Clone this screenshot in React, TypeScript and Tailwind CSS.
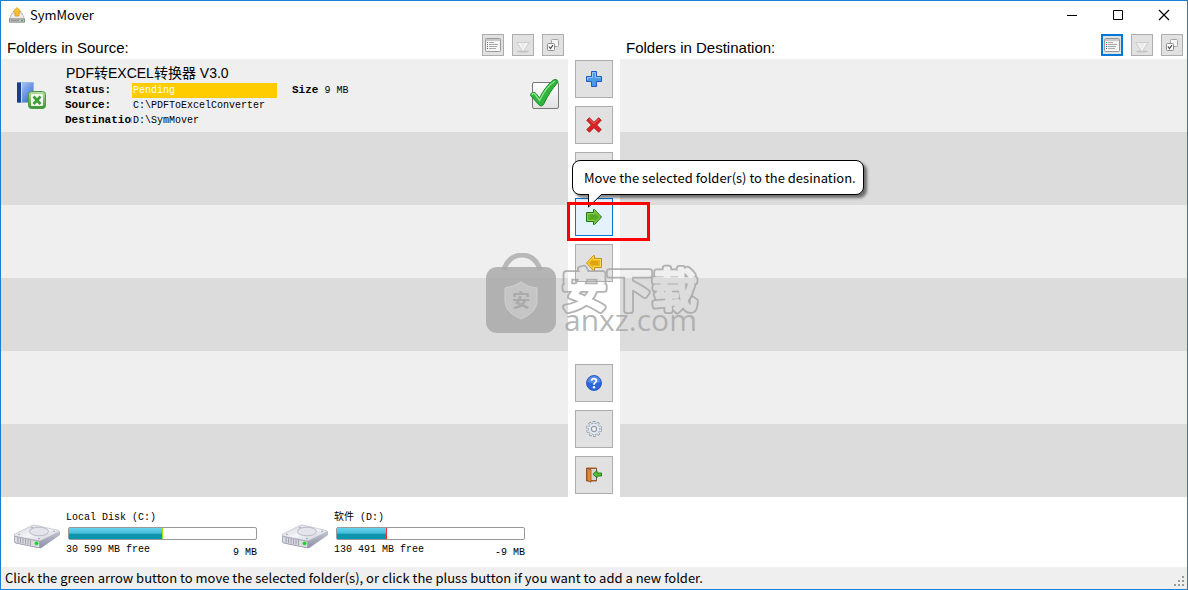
import { useState } from "react";
import type { ReactNode } from "react";
import clsx from "clsx";

const STRIPES = [0, 1, 2, 3, 4, 5];

const DRIVES = [
    { name: "Local Disk (C:)", free: "30 599 MB free", change: "9 MB", used: 50, edge: "border-lime-400" },
    { name: "软件 (D:)", free: "130 491 MB free", change: "-9 MB", used: 26.5, edge: "border-red-500" },
];

/* Icons */

function AppIcon() {
    return (
        <svg width="16" height="16" viewBox="0 0 16 16" aria-hidden="true">
            <path d="M3 6h10l2.500 6H.5z" fill="#ececec" stroke="#a8a8a8" strokeWidth=".7" />
            <path d="M.5 12h15v3.200H.5z" fill="#c9cbcb" stroke="#777" strokeWidth=".8" />
            <path d="M2 13.600h8" stroke="#8f9594" />
            <path d="M12 13.600h2" stroke="#2fb52f" strokeWidth="1.400" />
            <path d="M8 .5l4 4.200h-2V9H6V4.700H4z" fill="#fbc02d" stroke="#e09a10" strokeWidth=".8" />
        </svg>
    );
}

function ListIcon() {
    return (
        <svg width="16" height="14" viewBox="0 0 16 14" className="shrink-0" aria-hidden="true">
            <rect x="0.5" y="0.5" width="15" height="13" rx="1" fill="#f6f6f6" stroke="#999" />
            <rect x="1" y="1" width="14" height="2" fill="#c9c9c9" />
            <g shapeRendering="crispEdges">
                <rect x="2" y="4" width="1" height="1" fill="#22bb22" />
                <rect x="2" y="6" width="1" height="1" fill="#dd4433" />
                <rect x="2" y="8" width="1" height="1" fill="#3366cc" />
                <rect x="2" y="10" width="1" height="1" fill="#555555" />
                <rect x="4" y="4" width="5" height="1" fill="#aaaaaa" />
                <rect x="4" y="6" width="9" height="1" fill="#aaaaaa" />
                <rect x="4" y="8" width="8" height="1" fill="#aaaaaa" />
                <rect x="4" y="10" width="7" height="1" fill="#aaaaaa" />
            </g>
        </svg>
    );
}

function TriangleIcon() {
    return (
        <svg width="16" height="14" viewBox="0 0 16 14" className="mt-1 shrink-0" aria-hidden="true">
            <ellipse cx="8" cy="11.500" rx="6" ry="1" fill="#c2c2c2" />
            <path d="M1.500 2.500h13L8 11.500z" fill="#ebebeb" stroke="#c6c6c6" strokeWidth="0.8" />
            <path d="M4.500 3L8 10.500 11.500 3" fill="none" stroke="#fafafa" strokeWidth="0.8" />
        </svg>
    );
}

function SelectIcon() {
    return (
        <svg width="14" height="14" viewBox="0 0 14 14" className="shrink-0" aria-hidden="true">
            <rect x="5.500" y="1.500" width="7" height="7" rx="1" fill="#f5f5f5" stroke="#a5a5a5" />
            <rect x="1.500" y="5.500" width="7" height="7" rx="1" fill="#fafafa" stroke="#8c8c8c" />
            <path d="M3 8.500l1.500 2L7 7.200" fill="none" stroke="#4a4a4a" strokeWidth="1.200" />
        </svg>
    );
}

function PlusIcon() {
    return (
        <svg width="16" height="16" viewBox="0 0 16 16" aria-hidden="true">
            <path d="M5.500.5h5v5h5v5h-5v5h-5v-5h-5v-5h5z" fill="#4e9ae8" stroke="#1c59c4" strokeLinejoin="round" />
            <path d="M6.500 6.500v-5h3v5h5M1.500 9v-2.500h5" fill="none" stroke="#92c8fb" />
        </svg>
    );
}

function CrossIcon() {
    return (
        <svg width="16" height="16" viewBox="0 0 16 16" aria-hidden="true">
            <path d="M3.300.7L8 5.300 12.700.7l2.600 2.600L10.700 8l4.600 4.600-2.700 2.700L8 10.700l-4.600 4.600-2.700-2.700L5.300 8 .7 3.300z" fill="#d92424" stroke="#b01212" strokeWidth=".8" strokeLinejoin="round" />
            <path d="M3.300 2L8 6.700 12.700 2" fill="none" stroke="#ef7b6d" strokeWidth=".8" />
        </svg>
    );
}

function ArrowIcon({ color }: { color: "green" | "gold" }) {
    const green = color === "green";
    return (
        <svg width="16" height="16" viewBox="0 0 16 16" className={green ? "" : "-scale-x-100"} aria-hidden="true">
            <path d="M0.500 3.500h7V0.500h1L15.500 8l-7 7.500h-1v-3h-7z" fill={green ? "#8fd04f" : "#ffdc55"} stroke={green ? "#147a10" : "#c98e08"} strokeLinejoin="round" />
            <path d="M2 5h6.500V2.500L14 8l-5.500 5.500V11H2z" fill={green ? "#62b12d" : "#edb41a"} />
            <path d="M4 6h6l2 2-2 2H4z" fill={green ? "#55a624" : "#dca40c"} />
        </svg>
    );
}

function HelpIcon() {
    return (
        <svg width="16" height="16" viewBox="0 0 16 16" aria-hidden="true">
            <circle cx="8" cy="8" r="7.500" fill="#2c68dc" stroke="#1b4bb5" strokeWidth=".8" />
            <path d="M1.500 7a6.500 6 0 0 1 13 0Q8 9.500 1.500 7z" fill="#6ea2f2" opacity=".6" />
            <path d="M5.600 5.800C5.700 2.900 10.500 3 10.400 5.700 10.300 7.500 8 7.400 8 9.700" fill="none" stroke="#fff" strokeWidth="1.800" />
            <circle cx="8" cy="12.200" r="1.200" fill="#fff" />
        </svg>
    );
}

function GearIcon() {
    return (
        <svg width="16" height="16" viewBox="0 0 16 16" aria-hidden="true">
            <circle cx="8" cy="8" r="6.500" fill="none" stroke="#8796a6" strokeWidth="2.800" strokeDasharray="2.500 1.584" />
            <circle cx="8" cy="8" r="5.700" fill="#e3eaf1" stroke="#98a5b3" strokeWidth=".8" />
            <circle cx="8" cy="8" r="6.300" fill="none" stroke="#f1f5f9" strokeWidth="1.600" strokeDasharray="1.600 2.358" strokeDashoffset="-.4" />
            <circle cx="8" cy="8" r="2.800" fill="#dedede" stroke="#87929d" />
            <circle cx="8" cy="8" r="1.200" fill="#f5f5f5" />
        </svg>
    );
}

function ExitIcon() {
    return (
        <svg width="16" height="16" viewBox="0 0 16 16" aria-hidden="true">
            <path d="M.5 1h10v13H.5z" fill="#b8672b" stroke="#854515" strokeWidth=".8" />
            <path d="M5 2h5v11H5z" fill="#d5d5d5" />
            <path d="M1 1.200l4 1.600v12.500l-4-2z" fill="#d98944" stroke="#914c18" strokeWidth=".7" />
            <path d="M7 7.200l4-3.700V6h4.500v3H11v2z" fill="#58bd37" stroke="#147a10" strokeWidth=".9" />
        </svg>
    );
}

function FolderIcon() {
    return (
        <svg width="32" height="32" viewBox="0 0 32 32" aria-hidden="true">
            <defs>
                <linearGradient id="book" x1="0" y1="0" x2="1" y2="1">
                    <stop offset="0" stopColor="#b8d4fa" />
                    <stop offset="1" stopColor="#2c62cf" />
                </linearGradient>
                <linearGradient id="sheet" x1="0" y1="0" x2="0" y2="1">
                    <stop offset="0" stopColor="#b9dda2" />
                    <stop offset="1" stopColor="#37952f" />
                </linearGradient>
            </defs>
            <path d="M1.500 2.500h16v20h-16z" fill="url(#book)" stroke="#8aa9d6" strokeWidth=".6" />
            <path d="M1 2.500h4v20H1z" fill="#173f91" />
            <path d="M5.500 2.500v20" stroke="#dcebff" strokeWidth=".8" />
            <rect x="12.500" y="11.500" width="17" height="17" rx="3" fill="url(#sheet)" stroke="#4a9a43" />
            <rect x="15" y="14" width="12" height="12" rx="1" fill="#f2faee" />
            <path d="M17.500 16.500l7 7.500M24.500 16.500l-7 7.500" stroke="#3d9e35" strokeWidth="2.600" />
        </svg>
    );
}

function DriveIcon() {
    return (
        <svg width="48" height="26" viewBox="0 0 48 26" aria-hidden="true">
            <defs>
                <linearGradient id="top" x1="0" y1="0" x2="1" y2="1">
                    <stop offset="0" stopColor="#cfd1da" />
                    <stop offset=".5" stopColor="#f4f5f8" />
                    <stop offset="1" stopColor="#c6c8d3" />
                </linearGradient>
                <linearGradient id="side" x1="0" y1="0" x2="0" y2="1">
                    <stop offset="0" stopColor="#d3d5df" />
                    <stop offset="1" stopColor="#8e91a6" />
                </linearGradient>
            </defs>
            <path d="M1 11L19 2q1-.6 3-.4L46 7q2 .6 1 1.500V11L29 23.500q-1.500 1-4 .5L3 19.500Q1 19 1 17z" fill="url(#side)" />
            <path d="M1 10.500L19 1.500q1-.6 3-.4L45.500 6.500q1.500.7.3 1.500L28.500 16.300q-1.500.7-3.500.4L2 12q-1.500-.6-1-1.500z" fill="url(#top)" stroke="#b6b9c6" strokeWidth=".6" />
            <ellipse cx="26" cy="7.500" rx="9.500" ry="4.300" fill="#e3e5eb" stroke="#a9acba" strokeWidth=".8" />
            <path d="M1.500 12.500l24 4.800q1 .2 1 1.200v4.200q0 1-1 .8L3.500 19Q1.500 18.500 1.500 17z" fill="#dcdde3" stroke="#9799a8" strokeWidth=".5" />
            <path d="M5 13.500v5M7.500 14v5M10 14.500v5M12.500 15v5M15 15.500v5M17.500 16v5" stroke="#a0a2ad" strokeWidth="1.100" />
            <circle cx="23.500" cy="19.300" r="1.900" fill="#20d42d" />
            <circle cx="19" cy="3.500" r=".7" fill="#8c8f9e" />
            <circle cx="6" cy="10.500" r=".7" fill="#8c8f9e" />
            <circle cx="41" cy="7.200" r=".7" fill="#8c8f9e" />
            <circle cx="26" cy="14.500" r=".7" fill="#8c8f9e" />
        </svg>
    );
}

function TickMark() {
    return (
        <svg width="32" height="32" viewBox="0 0 32 32" className="pointer-events-none absolute -top-1 -left-1" aria-hidden="true">
            <path d="M2.500 17.500c-.5-2.500 3.500-4.500 5.500-2l3.500 4.500C15 13 20 6 25.500 2c2-1.400 5.500.3 4 2.800C24 11 19.500 18 16 25.500c-1 2.500-3.500 3.500-5.500.8z" fill="#2fb53b" stroke="#168825" />
            <path d="M4 17c0-1.500 2-2 3-.7l4.700 6C15.500 14 21 7 27 3" fill="none" stroke="#8be08a" strokeWidth="1.500" />
        </svg>
    );
}

/* Controls */

function SmallButton({ label, focused, children }: { label: string; focused?: boolean; children: ReactNode }) {
    return (
        <button
            type="button"
            aria-label={label}
            className={clsx(
                "flex size-[22px] items-center justify-center bg-[#e1e1e1]",
                focused ? "border-2 border-[#0078d7]" : "border border-[#adadad]"
            )}
        >
            {children}
        </button>
    );
}

function ToolButton({ label, active, children }: { label: string; active?: boolean; children?: ReactNode }) {
    return (
        <button
            type="button"
            aria-label={label}
            className={clsx(
                "flex size-[38px] items-center justify-center border",
                active ? "border-[#0078d7] bg-[#e5f1fb]" : "border-[#adadad] bg-[#e1e1e1]"
            )}
        >
            {children}
        </button>
    );
}

function PanelHeader({ title, focused }: { title: string; focused?: boolean }) {
    return (
        <div className="flex h-7 items-start justify-between pr-1 pl-1.5">
            <h2 className="pt-[7px] text-[15px] leading-5">{title}</h2>
            <div className="flex gap-2 pt-[3px]">
                <SmallButton label="List view" focused={focused}><ListIcon /></SmallButton>
                <SmallButton label="Sort"><TriangleIcon /></SmallButton>
                <SmallButton label="Select all"><SelectIcon /></SmallButton>
            </div>
        </div>
    );
}

function FolderItem() {
    const [checked, setChecked] = useState(true);

    return (
        <div className="flex items-center">
            <div className="w-16 pt-1 pl-[15px]"><FolderIcon /></div>
            <div className="min-w-0 flex-1 pt-1">
                <h3 className="pl-px text-sm leading-5">PDF转EXCEL转换器 V3.0</h3>
                <dl className="grid grid-cols-[67px_145px_1fr] font-['Liberation_Mono','Noto_Sans_CJK_SC',monospace] text-[10px] leading-[15px]">
                    <dt className="text-[11px] font-bold">Status:</dt>
                    <dd className="bg-[#ffcc00] pl-px text-white">Pending</dd>
                    <dd className="pl-[15px]"><b className="text-[11px]">Size</b> 9 MB</dd>
                    <dt className="text-[11px] font-bold">Source:</dt>
                    <dd className="col-span-2 pl-px">C:\PDFToExcelConverter</dd>
                    <dt className="overflow-hidden text-[11px] font-bold">Destination:</dt>
                    <dd className="col-span-2 pl-px">D:\SymMover</dd>
                </dl>
            </div>
            <label className="relative mt-1 mr-[9px] size-[27px]">
                <input
                    type="checkbox"
                    aria-label="Select folder"
                    checked={checked}
                    onChange={(e) => setChecked(e.target.checked)}
                    className="block size-[27px] appearance-none rounded-xs border border-[#777] bg-linear-to-b from-white to-[#e2e2e2]"
                />
                {checked && <TickMark />}
            </label>
        </div>
    );
}

function FolderList({ label, children }: { label: string; children?: ReactNode }) {
    return (
        <ul aria-label={label} className="grid flex-1 auto-rows-fr">
            {STRIPES.map((i) => (
                <li key={i} className="min-h-[73px] odd:bg-[#efefef] even:bg-[#dcdcdc]">
                    {i === 0 && children}
                </li>
            ))}
        </ul>
    );
}

function Tooltip() {
    return (
        <div role="tooltip" className="absolute bottom-[41px] -left-[3px] z-10 rounded-lg border border-black bg-white py-[7px] pr-[7px] pl-[11px] font-['Noto_Sans_CJK_SC',sans-serif] text-[13px] leading-[19px] whitespace-nowrap shadow-[3px_3px_3px_rgba(0,0,0,0.5)]">
            Move the selected folder(s) to the desination.
            <svg width="16" height="14" viewBox="0 0 16 14" className="absolute top-full left-[15px]" aria-hidden="true">
                <path d="M.5 0v13L13.500 0" fill="#fff" />
                <path d="M.5 0v13L13.500.5" fill="none" stroke="#000" />
            </svg>
        </div>
    );
}

function Watermark() {
    return (
        <div className="pointer-events-none absolute top-[222px] left-1/2 z-30 -ml-[108px]">
            <svg width="224" height="96" viewBox="0 0 224 96" aria-hidden="true">
                <defs>
                    <mask id="outline">
                        <g fontFamily="Noto Sans CJK SC, sans-serif" fontSize="45" strokeLinejoin="round">
                            <text x="76" y="54" fill="#fff" stroke="#fff" strokeWidth="7">安下载</text>
                            <text x="76" y="54" fill="#000" stroke="#000" strokeWidth="3.500">安下载</text>
                        </g>
                    </mask>
                </defs>
                <path d="M18 17C23-3 49-3 54 17" fill="none" stroke="#aaa" strokeOpacity=".8" strokeWidth="5" />
                <rect x="0" y="14" width="70" height="66" rx="11" fill="#a9a9a9" fillOpacity=".85" />
                <path d="M35 29q8 6 16 6v14q-1 11-16 17-15-6-16-17V35q9-1 16-6z" fill="#c5c5c5" stroke="#d0d0d0" />
                <text x="26" y="54" fontFamily="Noto Sans CJK SC, sans-serif" fontSize="18" fontWeight="700" fill="#aaa">安</text>
                <rect x="70" y="0" width="150" height="66" fill="#a6a6a6" fillOpacity=".85" mask="url(#outline)" />
                <text x="78" y="78" fontFamily="Open Sans, sans-serif" fontSize="30" fontWeight="500" fill="#a9a9a9" fillOpacity=".85">anxz.com</text>
            </svg>
        </div>
    );
}

function Drive({ name, free, change, used, edge }: (typeof DRIVES)[number]) {
    return (
        <section className="flex w-[244px] gap-[5px]">
            <div className="pt-3.5"><DriveIcon /></div>
            <div className="flex-1 font-['Liberation_Mono','Noto_Sans_CJK_SC',monospace] text-[10px] leading-4">
                <h3>{name}</h3>
                <div className="mt-px ml-0.5 h-[13px] rounded-xs border border-[#999] bg-white">
                    <div
                        className={clsx("h-full border-r bg-linear-to-b from-[#66d3ef] from-0% via-[#46bddb] via-45% to-[#0995ac] to-60%", edge)}
                        style={{ width: `${used}%` }}
                    />
                </div>
                <div className="flex h-[21px] items-end justify-between">
                    <span className="pb-[3px]">{free}</span>
                    <span>{change}</span>
                </div>
            </div>
        </section>
    );
}

export default function App() {
    return (
        <div className="flex min-h-screen flex-col border border-[#1a7fd0] bg-white font-['Liberation_Sans','Noto_Sans_CJK_SC',sans-serif] text-black">
            {/* Title bar */}
            <header className="flex h-[30px] items-center justify-between pr-[17px] pb-0.5 pl-2">
                <div className="flex items-center gap-[5px]">
                    <AppIcon />
                    <h1 className="font-['Noto_Sans_CJK_SC',sans-serif] text-[13px] leading-5">SymMover</h1>
                </div>
                <div className="flex gap-[34px]">
                    <button type="button" aria-label="Minimize">
                        <svg width="12" height="12" viewBox="0 0 12 12"><path d="M1 6.500h10" stroke="#000" /></svg>
                    </button>
                    <button type="button" aria-label="Maximize">
                        <svg width="12" height="12" viewBox="0 0 12 12"><path d="M1.500 1.500h9v9h-9z" fill="none" stroke="#000" /></svg>
                    </button>
                    <button type="button" aria-label="Close">
                        <svg width="12" height="12" viewBox="0 0 12 12"><path d="M1 1l10 10M11 1L1 11" stroke="#000" strokeWidth="1.200" /></svg>
                    </button>
                </div>
            </header>

            {/* Source, toolbar and destination */}
            <main className="relative grid flex-1 grid-cols-[1fr_52px_1fr]">
                <section className="flex flex-col">
                    <PanelHeader title="Folders in Source:" />
                    <FolderList label="Source folders"><FolderItem /></FolderList>
                </section>

                <div className="flex flex-col items-center justify-between pt-[29px] pb-[3px]">
                    <div className="flex flex-col gap-2">
                        <ToolButton label="Add folder"><PlusIcon /></ToolButton>
                        <ToolButton label="Remove folder"><CrossIcon /></ToolButton>
                        <ToolButton label="Edit folder" />
                        <div className="relative">
                            <ToolButton label="Move to destination" active><ArrowIcon color="green" /></ToolButton>
                            <Tooltip />
                            <div className="pointer-events-none absolute top-1 -left-2 z-20 h-[39px] w-[83px] border-3 border-[#ff0000]" />
                        </div>
                        <ToolButton label="Move to source"><ArrowIcon color="gold" /></ToolButton>
                    </div>
                    <div className="flex flex-col gap-2">
                        <ToolButton label="Help"><HelpIcon /></ToolButton>
                        <ToolButton label="Settings"><GearIcon /></ToolButton>
                        <ToolButton label="Exit"><ExitIcon /></ToolButton>
                    </div>
                </div>

                <section className="flex flex-col">
                    <PanelHeader title="Folders in Destination:" focused />
                    <FolderList label="Destination folders" />
                </section>

                <Watermark />
            </main>

            {/* Drives */}
            <div className="flex gap-6 px-3 pt-[13px] pb-1.5">
                {DRIVES.map((drive) => (
                    <Drive key={drive.name} {...drive} />
                ))}
            </div>

            {/* Status bar */}
            <footer className="flex items-end justify-between bg-[#efefef] pr-px pl-1">
                <p className="font-['Noto_Sans_CJK_SC',sans-serif] text-[13px] leading-[22px]">
                    Click the green arrow button to move the selected folder(s), or click the pluss button if you want to add a new folder.
                </p>
                <svg width="12" height="13" viewBox="0 0 12 13" fill="#999" aria-hidden="true">
                    <path d="M8 0h2v2H8zM8 4h2v2H8zM8 8h2v2H8zM4 4h2v2H4zM4 8h2v2H4zM0 8h2v2H0z" />
                </svg>
            </footer>
        </div>
    );
}
